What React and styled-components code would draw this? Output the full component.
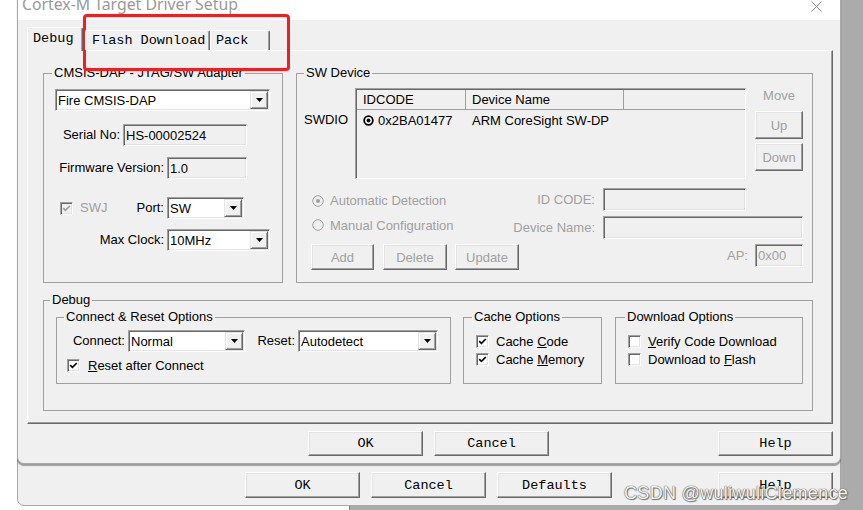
import React from "react";
import styled, { createGlobalStyle } from "styled-components";

const GlobalStyle = createGlobalStyle`
  body {
    margin: 0;
    background: #fff;
    font-family: "Liberation Sans", Arial, sans-serif;
  }
`;

const Desktop = styled.div`
  position: relative;
  width: 863px;
  height: 510px;
  overflow: hidden;
  background: #fff;
`;

// window lying behind both dialogs (only its edges show)
const GrayWindow = styled.div`
  position: absolute;
  left: 349px;
  top: 0;
  right: 0;
  bottom: 0;
  background: #ababab;
  border-left: 1px solid #7a7a7a;
`;

const Dialog = styled.div`
  position: absolute;
  left: 17px;
  top: ${(p) => p.$top}px;
  width: 824px;
  height: ${(p) => p.$height}px;
  box-sizing: border-box;
  display: flex;
  flex-direction: column;
  background: #f0f0f0;
  border: 1px solid #a8a8a8;
  border-radius: 0 0 7px 7px;
  box-shadow: ${(p) => (p.$front ? "0 2px 1px rgba(0,0,0,0.35)" : "none")};
  overflow: hidden;
`;

const TitleBar = styled.div`
  flex: none;
  height: 31px;
  display: flex;
  align-items: center;
  padding: 0 18px 0 4px;
  background: #fff;
  color: #999;
  font-family: "Noto Sans", "Liberation Sans", sans-serif;
  font-size: 15.8px;
`;

const TitleText = styled.span`
  flex: 1;
  margin-top: -1px;
  white-space: nowrap;
`;

const CloseIcon = styled.svg`
  flex: none;
  margin-top: 3px;
`;

const DialogBody = styled.div`
  flex: 1;
  display: flex;
  flex-direction: column;
  padding: 0 7px 0 9px;
`;

const TabStrip = styled.div`
  position: relative;
  z-index: 1;
  flex: none;
  display: flex;
  align-items: flex-end;
  height: 23px;
  margin-top: 7px;
`;

const Tab = styled.div`
  box-sizing: border-box;
  width: ${(p) => p.$w}px;
  height: ${(p) => (p.$active ? 24 : 20)}px;
  margin-left: ${(p) => p.$ml || 0}px;
  margin-bottom: ${(p) => (p.$active ? -1 : 0)}px;
  padding: 0 0 ${(p) => (p.$active ? 2 : 0)}px ${(p) => p.$pl || 5}px;
  display: flex;
  align-items: center;
  background: #f0f0f0;
  border-top: 1px solid #fff;
  border-left: 1px solid #fff;
  border-right: 1px solid #696969;
  box-shadow: inset -1px 0 0 #a0a0a0;
  border-radius: 2px 2px 0 0;
  font-family: "Liberation Mono", monospace;
  font-size: 13.5px;
  color: #000;
  white-space: nowrap;
`;

const TabPane = styled.div`
  box-sizing: border-box;
  flex: none;
  height: 374px;
  display: flex;
  flex-direction: column;
  padding: 14px 0 0 15px;
  border: 1px solid;
  border-color: #fff #696969 #696969 #fff;
  box-shadow: inset -1px -1px 0 #a0a0a0;
`;

const GroupRow = styled.div`
  display: flex;
  margin-top: ${(p) => p.$mt || 0}px;
  padding: ${(p) => p.$pad || 0};
`;

const Group = styled.fieldset`
  box-sizing: border-box;
  flex: none;
  width: ${(p) => p.$w}px;
  height: ${(p) => p.$h}px;
  min-width: 0;
  margin: ${(p) => p.$mt || 0}px 0 0 ${(p) => p.$ml || 0}px;
  padding: 0;
  border: 1px solid #a0a0a0;
`;

const Legend = styled.legend`
  margin-left: ${(p) => p.$ml ?? 7}px;
  padding: 0 2px;
  font-size: 13px;
  line-height: 16px;
  color: #000;
`;

const GroupBody = styled.div`
  display: flex;
  flex-direction: column;
  padding: ${(p) => p.$pad || 0};
`;

const Row = styled.div`
  display: flex;
  align-items: ${(p) => p.$align || "center"};
  justify-content: ${(p) => p.$justify || "flex-start"};
  margin-top: ${(p) => p.$mt || 0}px;
  padding-left: ${(p) => p.$pl || 0}px;
  padding-right: ${(p) => p.$pr || 0}px;
`;

const Cluster = styled.div`
  display: flex;
  align-items: center;
  margin-right: ${(p) => p.$mr || 0}px;
`;

const Label = styled.span`
  flex: none;
  width: ${(p) => (p.$w ? `${p.$w}px` : "auto")};
  margin-left: ${(p) => p.$ml || 0}px;
  margin-right: ${(p) => p.$mr || 0}px;
  text-align: ${(p) => (p.$w ? "right" : "left")};
  font-size: 13px;
  line-height: 16px;
  color: ${(p) => (p.$dim ? "#a0a0a0" : "#000")};
  white-space: nowrap;
`;

const LabelCell = styled.div`
  flex: none;
  width: ${(p) => p.$w}px;
  display: flex;
  align-items: center;
  justify-content: space-between;
  margin-right: 3px;
`;

const Field = styled.div`
  box-sizing: border-box;
  flex: none;
  width: ${(p) => p.$w}px;
  height: ${(p) => p.$h || 22}px;
  margin-left: ${(p) => p.$ml || 0}px;
  display: flex;
  align-items: center;
  padding-left: 2px;
  background: ${(p) => (p.$white ? "#fff" : "#f0f0f0")};
  border: 1px solid;
  border-color: #a0a0a0 #fff #fff #a0a0a0;
  box-shadow: inset 1px 1px 0 #696969, inset -1px -1px 0 #e3e3e3;
  font-size: 13px;
  color: ${(p) => (p.$dim ? "#a0a0a0" : "#000")};
  white-space: nowrap;
`;

const ComboText = styled.span`
  flex: 1;
  padding-top: 1px;
`;

const DropButton = styled.span`
  box-sizing: border-box;
  align-self: stretch;
  width: 18px;
  margin: 1px 1px 1px 0;
  display: flex;
  align-items: center;
  justify-content: center;
  background: #f0f0f0;
  border: 1px solid;
  border-color: #e3e3e3 #696969 #696969 #e3e3e3;
  box-shadow: inset 1px 1px 0 #fff, inset -1px -1px 0 #a0a0a0;
`;

const SmallButton = styled.button`
  box-sizing: border-box;
  flex: none;
  width: ${(p) => p.$w}px;
  height: ${(p) => p.$h || 26}px;
  margin: ${(p) => p.$mt || 0}px 0 0 ${(p) => p.$ml || 0}px;
  padding: 0;
  background: #f0f0f0;
  border: 1px solid;
  border-color: #fff #696969 #696969 #fff;
  box-shadow: inset -1px -1px 0 #a0a0a0, inset 1px 1px 0 #e3e3e3;
  font-family: "Liberation Sans", Arial, sans-serif;
  font-size: 13px;
  color: #a0a0a0;
`;

const PushButton = styled.button`
  box-sizing: border-box;
  flex: none;
  width: 115px;
  height: ${(p) => p.$h || 25}px;
  margin-left: ${(p) => (p.$auto ? "auto" : `${p.$ml || 0}px`)};
  padding: 0;
  background: #f0f0f0;
  border: 1px solid;
  border-color: #fff #696969 #696969 #fff;
  box-shadow: inset -1px -1px 0 #a0a0a0, inset 1px 1px 0 #e3e3e3;
  font-family: "Liberation Mono", monospace;
  font-size: 13.5px;
  color: #000;
`;

const ButtonRow = styled.div`
  flex: none;
  display: flex;
  margin-top: ${(p) => (p.$end ? "auto" : `${p.$mt || 0}px`)};
  padding: 0 ${(p) => p.$pr || 0}px ${(p) => p.$pb || 0}px
    ${(p) => p.$pl || 0}px;
`;

const CheckBoxBox = styled.span`
  box-sizing: border-box;
  flex: none;
  width: 13px;
  height: 13px;
  margin-left: ${(p) => p.$ml || 0}px;
  display: flex;
  align-items: center;
  justify-content: center;
  background: ${(p) => (p.$disabled ? "#f0f0f0" : "#fff")};
  border: 1px solid;
  border-color: #a0a0a0 #fff #fff #a0a0a0;
  box-shadow: inset 1px 1px 0 #696969, inset -1px -1px 0 #e3e3e3;
`;

const CheckItem = styled.div`
  display: flex;
  align-items: center;
  height: 13px;
  margin-top: ${(p) => p.$mt || 0}px;
`;

const RadioItem = styled.div`
  display: flex;
  align-items: center;
  gap: 6px;
  margin-left: ${(p) => p.$ml || 0}px;
  margin-top: ${(p) => p.$mt || 0}px;
  font-size: 13px;
  color: #a0a0a0;
`;

const ListView = styled.div`
  box-sizing: border-box;
  flex: none;
  width: 391px;
  height: 91px;
  background: #f0f0f0;
  border: 1px solid;
  border-color: #a0a0a0 #fff #fff #a0a0a0;
  box-shadow: inset 1px 1px 0 #696969;
  font-size: 13px;
`;

const ListHeader = styled.div`
  display: flex;
  height: 19px;
  margin: 1px 0 0 1px;
  border-bottom: 1px solid #a0a0a0;
`;

const HeaderCell = styled.div`
  box-sizing: border-box;
  width: ${(p) => p.$w}px;
  padding-left: 6px;
  display: flex;
  align-items: center;
  border-right: ${(p) => (p.$last ? "none" : "1px solid #a0a0a0")};
`;

const ListRow = styled.div`
  display: flex;
  height: 20px;
  margin-left: 1px;
`;

const ListCell = styled.div`
  box-sizing: border-box;
  width: ${(p) => p.$w}px;
  padding-left: 6px;
  display: flex;
  align-items: center;
  gap: 4px;
`;

const SideColumn = styled.div`
  flex: none;
  display: flex;
  flex-direction: column;
  align-items: ${(p) => p.$align || "stretch"};
  width: ${(p) => p.$w}px;
  margin-left: ${(p) => p.$ml || 0}px;
  padding-top: ${(p) => p.$pt || 0}px;
`;

const CenteredLabel = styled(Label)`
  text-align: center;
`;

const Annotation = styled.div`
  position: absolute;
  left: 83px;
  top: 14px;
  width: 207px;
  height: 57px;
  box-sizing: border-box;
  border: 3px solid #f01e1e;
  border-radius: 4px;
`;

const Watermark = styled.div`
  position: absolute;
  right: 15px;
  top: 482px;
  font-family: "Liberation Sans", Arial, sans-serif;
  font-size: 18px;
  line-height: 22px;
  letter-spacing: 0.3px;
  color: #f4f4f4;
  text-shadow: 0 0 1px #555, 0 0 1px #555, 1px 1px 1px #777;
  white-space: nowrap;
`;

const Arrow = () => (
  <svg width="7" height="4" viewBox="0 0 7 4">
    <path d="M0 0h7L3.5 4z" fill="#000" />
  </svg>
);

const Combo = ({ w, ml, children }) => (
  <Field $w={w} $ml={ml} $white>
    <ComboText>{children}</ComboText>
    <DropButton>
      <Arrow />
    </DropButton>
  </Field>
);

const CheckBox = ({ checked, disabled, ml }) => (
  <CheckBoxBox $disabled={disabled} $ml={ml}>
    {checked && (
      <svg width="9" height="9" viewBox="0 0 9 9">
        <path
          d="M1.2 4.2 L3.4 6.4 L7.8 2"
          fill="none"
          stroke={disabled ? "#a0a0a0" : "#000"}
          strokeWidth="1.7"
        />
      </svg>
    )}
  </CheckBoxBox>
);

const Radio = ({ on }) => (
  <svg width="12" height="12" viewBox="0 0 12 12">
    <circle cx="6" cy="6" r="5.3" fill="#f0f0f0" stroke="#a0a0a0" />
    {on && <circle cx="6" cy="6" r="2" fill="#a0a0a0" />}
  </svg>
);

const SelectedMark = () => (
  <svg width="11" height="11" viewBox="0 0 11 11">
    <circle cx="5.5" cy="5.5" r="4.3" fill="#fff" stroke="#000" strokeWidth="1.8" />
    <circle cx="5.5" cy="5.5" r="1.9" fill="#000" />
  </svg>
);

const CheckLabel = ({ checked, children, ml = 12 }) => (
  <CheckItem>
    <CheckBox checked={checked} ml={ml} />
    <Label $ml={7}>{children}</Label>
  </CheckItem>
);

export default function App() {
  return (
    <Desktop>
      <GlobalStyle />
      <GrayWindow />

      <Dialog $top={300} $height={206}>
        <ButtonRow $end $pl={227} $pr={7} $pb={7}>
          <PushButton $h={26}>OK</PushButton>
          <PushButton $h={26} $ml={11}>
            Cancel
          </PushButton>
          <PushButton $h={26} $ml={11}>
            Defaults
          </PushButton>
          <PushButton $h={26} $auto>
            Help
          </PushButton>
        </ButtonRow>
      </Dialog>

      <Dialog $top={-12} $height={476} $front>
        <TitleBar>
          <TitleText>Cortex-M Target Driver Setup</TitleText>
          <CloseIcon width="11" height="11" viewBox="0 0 11 11">
            <path d="M0.5 0.5L10.5 10.5M10.5 0.5L0.5 10.5" stroke="#8a8a8a" strokeWidth="1" />
          </CloseIcon>
        </TitleBar>

        <DialogBody>
          <TabStrip>
            <Tab $active $w={56}>
              Debug
            </Tab>
            <Tab $w={125} $ml={2} $pl={6}>
              Flash Download
            </Tab>
            <Tab $w={60} $pl={5}>
              Pack
            </Tab>
          </TabStrip>

          <TabPane>
            <GroupRow>
              <Group $w={240} $h={218}>
                <Legend $ml={8}>CMSIS-DAP - JTAG/SW Adapter</Legend>
                <GroupBody $pad="8px 0 0 11px">
                  <Combo w={215}>Fire CMSIS-DAP</Combo>
                  <Row $mt={13}>
                    <Label $w={65} $mr={3}>
                      Serial No:
                    </Label>
                    <Field $w={124}>HS-00002524</Field>
                  </Row>
                  <Row $mt={11}>
                    <Label $w={109} $mr={3}>
                      Firmware Version:
                    </Label>
                    <Field $w={80}>1.0</Field>
                  </Row>
                  <Row $mt={18}>
                    <LabelCell $w={109}>
                      <CheckItem>
                        <CheckBox checked disabled ml={5} />
                        <Label $ml={7} $dim>
                          SWJ
                        </Label>
                      </CheckItem>
                      <Label>Port:</Label>
                    </LabelCell>
                    <Combo w={77}>SW</Combo>
                  </Row>
                  <Row $mt={10}>
                    <Label $w={109} $mr={3}>
                      Max Clock:
                    </Label>
                    <Combo w={103}>10MHz</Combo>
                  </Row>
                </GroupBody>
              </Group>

              <Group $w={517} $h={218} $ml={13}>
                <Legend $ml={7}>SW Device</Legend>
                <GroupBody $pad="7px 9px 0 7px">
                  <Row $align="flex-start">
                    <SideColumn $w={51} $pt={24}>
                      <Label>SWDIO</Label>
                    </SideColumn>
                    <ListView>
                      <ListHeader>
                        <HeaderCell $w={109}>IDCODE</HeaderCell>
                        <HeaderCell $w={158}>Device Name</HeaderCell>
                        <HeaderCell $w={120} $last />
                      </ListHeader>
                      <ListRow>
                        <ListCell $w={109}>
                          <SelectedMark />
                          0x2BA01477
                        </ListCell>
                        <ListCell $w={158}>ARM CoreSight SW-DP</ListCell>
                      </ListRow>
                    </ListView>
                    <SideColumn $w={48} $ml={9}>
                      <CenteredLabel $dim>Move</CenteredLabel>
                      <SmallButton $w={48} $h={28} $mt={7} disabled>
                        Up
                      </SmallButton>
                      <SmallButton $w={48} $h={28} $mt={4} disabled>
                        Down
                      </SmallButton>
                    </SideColumn>
                  </Row>

                  <Row $mt={9} $justify="space-between">
                    <RadioItem $ml={8} $mt={2}>
                      <Radio on />
                      Automatic Detection
                    </RadioItem>
                    <Cluster $mr={57}>
                      <Label $dim>ID CODE:</Label>
                      <Field $w={143} $h={23} $ml={8} />
                    </Cluster>
                  </Row>
                  <Row $mt={5} $justify="space-between">
                    <RadioItem $ml={8} $mt={-5}>
                      <Radio />
                      Manual Configuration
                    </RadioItem>
                    <Cluster>
                      <Label $dim>Device Name:</Label>
                      <Field $w={200} $h={23} $ml={8} />
                    </Cluster>
                  </Row>
                  <Row $mt={5} $align="flex-start" $justify="space-between">
                    <Cluster>
                      <SmallButton $w={63} $ml={7} disabled>
                        Add
                      </SmallButton>
                      <SmallButton $w={64} $ml={9} disabled>
                        Delete
                      </SmallButton>
                      <SmallButton $w={64} $ml={8} disabled>
                        Update
                      </SmallButton>
                    </Cluster>
                    <Cluster>
                      <Label $dim>AP:</Label>
                      <Field $w={48} $h={23} $ml={7} $dim>
                        0x00
                      </Field>
                    </Cluster>
                  </Row>
                </GroupBody>
              </Group>
            </GroupRow>

            <Group $w={770} $h={119} $mt={9}>
              <Legend $ml={6}>Debug</Legend>
              <GroupRow $pad="1px 9px 0 12px">
                <Group $w={395} $h={75}>
                  <Legend $ml={7}>Connect &amp; Reset Options</Legend>
                  <GroupBody $pad="5px 0 0 0">
                    <Row>
                      <Label $w={68} $mr={3}>
                        Connect:
                      </Label>
                      <Combo w={117}>Normal</Combo>
                      <Label $w={50} $mr={3}>
                        Reset:
                      </Label>
                      <Combo w={140}>Autodetect</Combo>
                    </Row>
                    <CheckItem $mt={7}>
                      <CheckBox checked ml={10} />
                      <Label $ml={8}>
                        <u>R</u>eset after Connect
                      </Label>
                    </CheckItem>
                  </GroupBody>
                </Group>

                <Group $w={139} $h={75} $ml={12}>
                  <Legend $ml={8}>Cache Options</Legend>
                  <GroupBody $pad="10px 0 0 0">
                    <CheckLabel checked>
                      Cache <u>C</u>ode
                    </CheckLabel>
                    <CheckItem $mt={5}>
                      <CheckBox checked ml={12} />
                      <Label $ml={7}>
                        Cache <u>M</u>emory
                      </Label>
                    </CheckItem>
                  </GroupBody>
                </Group>

                <Group $w={188} $h={75} $ml={13}>
                  <Legend $ml={9}>Download Options</Legend>
                  <GroupBody $pad="10px 0 0 0">
                    <CheckLabel>
                      <u>V</u>erify Code Download
                    </CheckLabel>
                    <CheckItem $mt={5}>
                      <CheckBox ml={12} />
                      <Label $ml={7}>
                        Download to <u>F</u>lash
                      </Label>
                    </CheckItem>
                  </GroupBody>
                </Group>
              </GroupRow>
            </Group>
          </TabPane>

          <ButtonRow $mt={7} $pl={281}>
            <PushButton>OK</PushButton>
            <PushButton $ml={11}>Cancel</PushButton>
            <PushButton $auto>Help</PushButton>
          </ButtonRow>
        </DialogBody>
      </Dialog>

      <Annotation />
      <Watermark>CSDN @wuliwuliClemence</Watermark>
    </Desktop>
  );
}
